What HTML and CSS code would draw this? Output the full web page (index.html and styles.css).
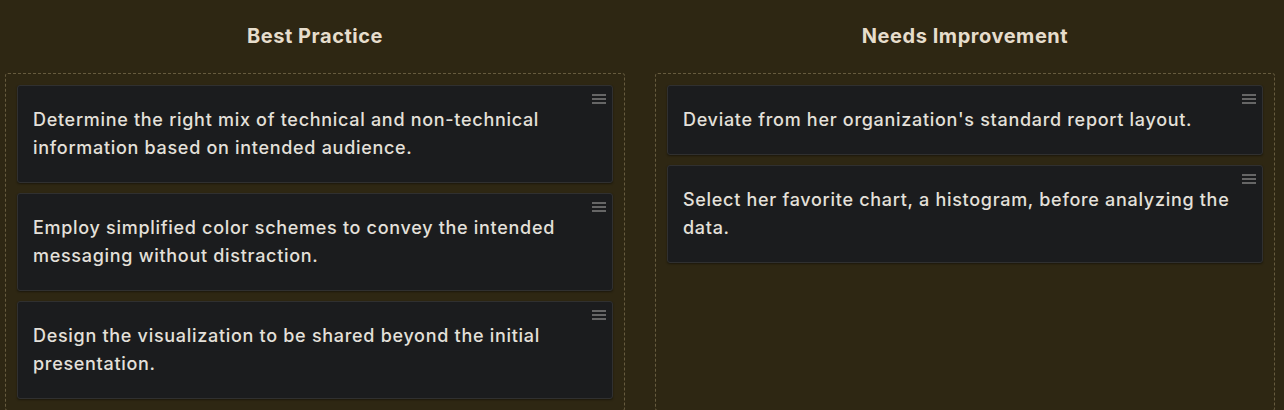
FILE: index.html
```html
<!DOCTYPE html>
<html>
<head>
<meta charset="utf-8">
<link rel="stylesheet" href="styles.css">
</head>
<body>
<div class="board">
  <section class="column">
    <h2 class="column-title">Best Practice</h2>
    <div class="dropzone">
      <div class="card"><span class="handle"><i></i><i></i><i></i></span><p>Determine the right mix of technical and non-technical information based on intended audience.</p></div>
      <div class="card"><span class="handle"><i></i><i></i><i></i></span><p>Employ simplified color schemes to convey the intended messaging without distraction.</p></div>
      <div class="card"><span class="handle"><i></i><i></i><i></i></span><p>Design the visualization to be shared beyond the initial presentation.</p></div>
    </div>
  </section>
  <section class="column">
    <h2 class="column-title">Needs Improvement</h2>
    <div class="dropzone">
      <div class="card"><span class="handle"><i></i><i></i><i></i></span><p>Deviate from her organization's standard report layout.</p></div>
      <div class="card"><span class="handle"><i></i><i></i><i></i></span><p>Select her favorite chart, a histogram, before analyzing the data.</p></div>
    </div>
  </section>
</div>
</body>
</html>
```
FILE: styles.css
```css
* { box-sizing: border-box; }
html, body {
  margin: 0;
  padding: 0;
  background: #2e2713;
  height: 410px;
  overflow: hidden;
}
body {
  font-family: Inter, "Noto Sans", sans-serif;
  color: #e4e0da;
}
.board {
  display: grid;
  grid-template-columns: 1fr 1fr;
  column-gap: 30px;
  padding: 0 9px 0 5px;
  height: 410px;
}
.column {
  display: flex;
  flex-direction: column;
}
.column-title {
  margin: 0;
  height: 73px;
  padding-top: 23px;
  text-align: center;
  font-size: 20px;
  line-height: 26px;
  font-weight: 700;
  color: #e6ddcc;
  letter-spacing: 0.55px;
}
.dropzone {
  flex: 1;
  border: 1px dashed #665b3e;
  border-radius: 3px;
  padding: 11px 11px;
  display: flex;
  flex-direction: column;
  gap: 10px;
  margin-bottom: 2px;
}
.card {
  position: relative;
  background: #1b1c1e;
  border: 1px solid #303030;
  border-radius: 3px;
  padding: 20px 14px 20px 15px;
  box-shadow: 0 1px 2px rgba(0,0,0,0.4);
}
.card p {
  margin: 0;
  font-size: 18px;
  line-height: 28px;
  font-weight: 500;
  letter-spacing: 0.7px;
}
.handle {
  position: absolute;
  top: 8px;
  right: 6px;
  width: 14px;
  display: flex;
  flex-direction: column;
  gap: 2px;
}
.handle i {
  display: block;
  height: 2px;
  background: #666666;
}
```
